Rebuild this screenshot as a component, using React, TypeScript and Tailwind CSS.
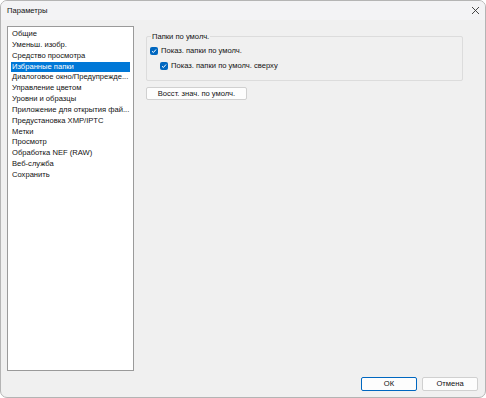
const items = [
  'Общие',
  'Уменьш. изобр.',
  'Средство просмотра',
  'Избранные папки',
  'Диалоговое окно/Предупрежде...',
  'Управление цветом',
  'Уровни и образцы',
  'Приложение для открытия фай...',
  'Предустановка XMP/IPTC',
  'Метки',
  'Просмотр',
  'Обработка NEF (RAW)',
  'Веб-служба',
  'Сохранить',
];

function Check() {
  return (
    <span className="flex h-[8px] w-[8px] items-center justify-center rounded-[2px] bg-[#0067c0]">
      <svg width="6" height="6" viewBox="0 0 6 6" fill="none">
        <path d="M1 3.2L2.4 4.5L5 1.5" stroke="white" strokeWidth="1" />
      </svg>
    </span>
  );
}

export default function App() {
  return (
    <div
      className="flex h-[398px] w-[486px] flex-col overflow-hidden rounded-[7px] border border-[#b4b4b4] bg-[#f0f0f0] text-[7.6px] text-[#111]"
      style={{ fontFamily: '"Liberation Sans", Arial, sans-serif' }}
    >
      {/* Title bar */}
      <div className="flex h-[19px] shrink-0 items-center justify-between bg-[#f3f3f5] pl-[6px] pr-[3px]">
        <span className="pt-[1px]">Параметры</span>
        <svg width="9" height="9" viewBox="0 0 9 9" className="mr-[2px]">
          <path d="M1 1L8 8M8 1L1 8" stroke="#333" strokeWidth="0.9" />
        </svg>
      </div>

      {/* Body */}
      <div className="flex flex-1 flex-col px-[6px] pt-[6px] pb-[6px]">
        <div className="flex flex-1 gap-[12px]">
          <div className="flex h-[345px] w-[127px] flex-col border border-[#9a9a9a] bg-white px-[3px] pt-[2px]">
            {items.map((it, i) => (
              <div
                key={i}
                className={`h-[10.85px] overflow-hidden whitespace-nowrap pl-[1px] leading-[10.85px] ${
                  i === 3 ? 'bg-[#0078d7] text-white' : ''
                }`}
              >
                {it}
              </div>
            ))}
          </div>

          <div className="flex flex-col pt-[10px]">
            <div className="relative h-[45px] w-[317px] rounded-[2px] border border-[#dcdcdc] pl-[3px] pt-[8px]">
              <span className="absolute -top-[6px] left-[4px] bg-[#f0f0f0] px-[1px]">Папки по умолч.</span>
              <div className="flex items-center gap-[3px]">
                <Check />
                <span>Показ. папки по умолч.</span>
              </div>
              <div className="mt-[4px] flex items-center gap-[3px] pl-[10px]">
                <Check />
                <span>Показ. папки по умолч. сверху</span>
              </div>
            </div>
            <button className="mt-[6px] flex h-[13px] w-[101px] items-center justify-center rounded-[2px] border border-[#d0d0d0] bg-[#fdfdfd]">
              Восст. знач. по умолч.
            </button>
          </div>
        </div>

        <div className="mt-[5px] flex justify-end gap-[5px] pr-[1px]">
          <button className="flex h-[14px] w-[56px] items-center justify-center rounded-[2px] border border-[#0067c0] bg-[#fdfdfd]">
            ОК
          </button>
          <button className="flex h-[14px] w-[56px] items-center justify-center rounded-[2px] border border-[#d0d0d0] bg-[#fdfdfd]">
            Отмена
          </button>
        </div>
      </div>
    </div>
  );
}
